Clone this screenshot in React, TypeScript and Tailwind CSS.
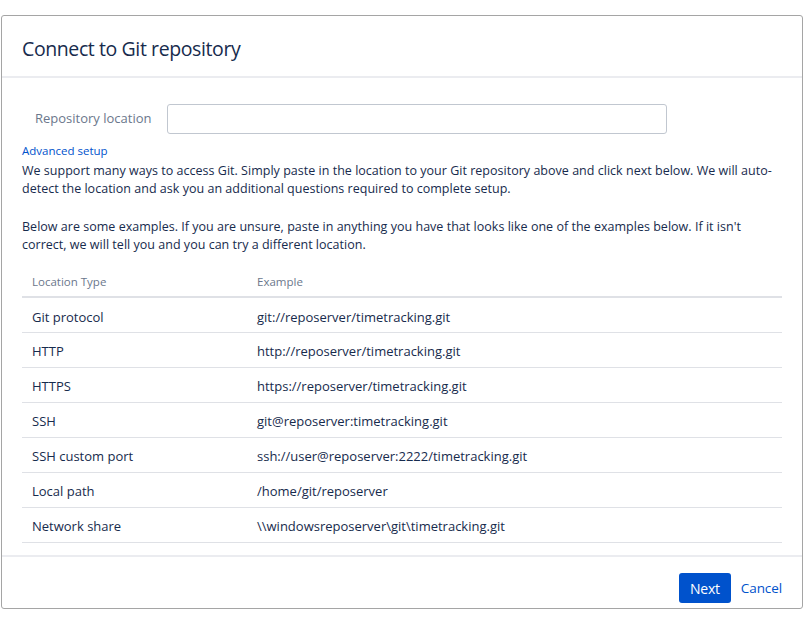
const rows = [
  ["Git protocol", "git://reposerver/timetracking.git"],
  ["HTTP", "http://reposerver/timetracking.git"],
  ["HTTPS", "https://reposerver/timetracking.git"],
  ["SSH", "git@reposerver:timetracking.git"],
  ["SSH custom port", "ssh://user@reposerver:2222/timetracking.git"],
  ["Local path", "/home/git/reposerver"],
  ["Network share", "\\\\windowsreposerver\\git\\timetracking.git"],
];

export default function App() {
  return (
    <div className="bg-white h-[625px] pt-[15px] font-['Open_Sans',sans-serif] text-[#172b4d]">
      <div className="ml-px w-[802px] h-[594px] border border-[#a5a5a5] rounded-[3px] flex flex-col">
        <header className="h-[62px] shrink-0 px-[20px] flex items-center border-b-2 border-[#ebecf0]">
          <h1 className="text-[19.5px] tracking-[-0.4px] pt-[5px]">Connect to Git repository</h1>
        </header>
        <main className="flex-1 px-[20px] pt-[26px]">
          <div className="flex items-center">
            <label className="w-[145px] pl-[13px] text-[13px] text-[#6b778c]">Repository location</label>
            <input className="w-[500px] h-[30px] border border-[#c1c7d0] rounded-[3px] px-2 text-[13px] outline-none" />
          </div>
          <a className="block mt-[8px] text-[11.5px] leading-[18px] text-[#0052cc]">Advanced setup</a>
          <p className="mt-[2px] text-[12.5px] leading-[18px] tracking-[0.02px]">
            We support many ways to access Git. Simply paste in the location to your Git repository above and click next below. We will auto-detect the location and ask you an additional questions required to complete setup.
          </p>
          <p className="mt-[20px] text-[12.5px] leading-[17.5px] tracking-[0.02px]">
            Below are some examples. If you are unsure, paste in anything you have that looks like one of the examples below. If it isn't correct, we will tell you and you can try a different location.
          </p>
          <table className="mt-[11px] w-[760px] border-collapse">
            <thead>
              <tr className="border-b-2 border-[#dfe1e6]">
                <th className="w-[235px] pl-[10px] pt-[3px] h-[33px] text-left font-normal text-[11.5px] text-[#6b778c]">Location Type</th>
                <th className="pt-[3px] text-left font-normal text-[11.5px] text-[#6b778c]">Example</th>
              </tr>
            </thead>
            <tbody>
              {rows.map(([type, example]) => (
                <tr key={type} className="border-b border-[#dfe1e6]">
                  <td className="pl-[10px] pt-[5px] h-[35px] text-[13px]">{type}</td>
                  <td className="pt-[5px] text-[13px]">{example}</td>
                </tr>
              ))}
            </tbody>
          </table>
        </main>
        <footer className="h-[53px] shrink-0 border-t-2 border-[#ebecf0] px-[20px] pt-[16px] flex items-start justify-end gap-[10px]">
          <button className="w-[52px] h-[30px] rounded-[3px] bg-[#0052cc] text-white text-[14px] tracking-[-0.2px]">Next</button>
          <a className="leading-[30px] text-[13.5px] tracking-[-0.1px] text-[#0052cc]">Cancel</a>
        </footer>
      </div>
    </div>
  );
}
